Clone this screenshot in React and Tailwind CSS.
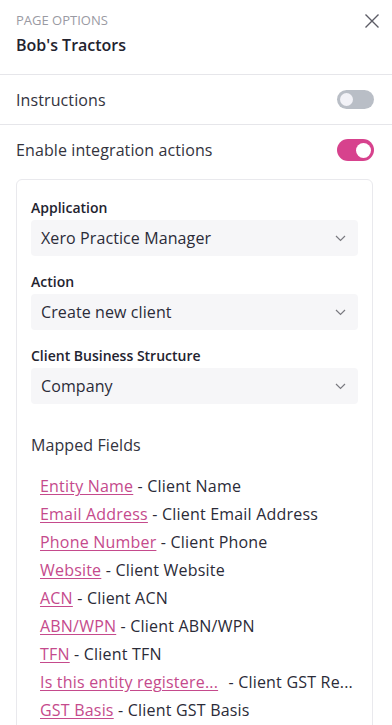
import React from 'react';

const fields = [
  ['Entity Name', 'Client Name'],
  ['Email Address', 'Client Email Address'],
  ['Phone Number', 'Client Phone'],
  ['Website', 'Client Website'],
  ['ACN', 'Client ACN'],
  ['ABN/WPN', 'Client ABN/WPN'],
  ['TFN', 'Client TFN'],
  ['Is this entity registere...', 'Client GST Re...'],
  ['GST Basis', 'Client GST Basis'],
];

function Toggle({ on }) {
  return (
    <div
      className={
        on
          ? 'w-[37px] h-[22px] rounded-full bg-[#d7428d] flex items-center justify-end pr-[3px]'
          : 'w-[37px] h-[19px] rounded-full bg-[#b9bec6] flex items-center justify-start pl-[3px]'
      }
    >
      <div className={on ? 'w-[15px] h-[15px] rounded-full bg-white' : 'w-[13px] h-[13px] rounded-full bg-[#f2f2f7]'} />
    </div>
  );
}

function Chevron() {
  return (
    <svg width="11" height="7" viewBox="0 0 11 7" fill="none">
      <path d="M1 1l4.5 4.5L10 1" stroke="#7a7a80" strokeWidth="1.2" />
    </svg>
  );
}

function SelectField({ label, value }) {
  return (
    <div className="flex flex-col">
      <div className="text-[14px] leading-5 font-semibold text-[#23232f] mb-[2px]">{label}</div>
      <div className="h-9 rounded bg-[#f6f6f8] flex items-center justify-between pl-[10px] pr-3">
        <span className="text-[16px] tracking-[0.1px] text-[#2b2b38]">{value}</span>
        <Chevron />
      </div>
    </div>
  );
}

export default function App() {
  return (
    <div
      className="w-[392px] h-[725px] overflow-hidden bg-white text-[#2b2b38]"
      style={{ fontFamily: '"Open Sans", "Noto Sans", sans-serif' }}
    >
      {/* Header */}
      <div className="px-4 pt-3 pb-[19px] border-b border-[#e6e6ea] flex justify-between">
        <div>
          <div className="text-[13px] leading-4 text-[#9a9aa3] uppercase">Page Options</div>
          <div className="mt-[7px] text-[16px] leading-5 font-semibold text-[#23232f]">Bob's Tractors</div>
        </div>
        <svg width="16" height="16" viewBox="0 0 16 16" className="mt-[1px] mr-[-4px]">
          <path d="M1.5 1.5l13 13M14.5 1.5l-13 13" stroke="#5c5c66" strokeWidth="1.4" />
        </svg>
      </div>

      <div className="h-[50px] px-4 flex items-center justify-between border-b border-[#e6e6ea]">
        <span className="text-[16px] tracking-[0.1px] text-[#33333d]">Instructions</span>
        <div className="mr-[2px]"><Toggle on={false} /></div>
      </div>

      <div className="h-[50px] px-4 flex items-center justify-between">
        <span className="text-[16px] tracking-[0.1px] text-[#33333d]">Enable integration actions</span>
        <div className="mr-[2px]"><Toggle on /></div>
      </div>

      {/* Integration card */}
      <div className="mx-4 mt-1 mr-[19px] border border-[#e9e9ed] rounded-md px-[14px] pt-[18px] pb-4">
        <div className="flex flex-col gap-4">
          <SelectField label="Application" value="Xero Practice Manager" />
          <SelectField label="Action" value="Create new client" />
          <SelectField label="Client Business Structure" value="Company" />
        </div>

        <div className="mt-[29px] text-[16px] leading-6 tracking-[0.1px] text-[#33333d]">Mapped Fields</div>

        <ul className="mt-[15px] pl-[9px]">
          {fields.map(([name, mapped]) => (
            <li key={name} className="text-[16px] leading-7 tracking-[0.2px] whitespace-nowrap">
              <span className="text-[#c54a8c] underline underline-offset-2 decoration-[#c54a8c]">{name}</span>
              <span className={name.endsWith('...') ? 'text-[#2b2b38] ml-[6px]' : 'text-[#2b2b38]'}> - {mapped}</span>
            </li>
          ))}
        </ul>
      </div>
    </div>
  );
}
